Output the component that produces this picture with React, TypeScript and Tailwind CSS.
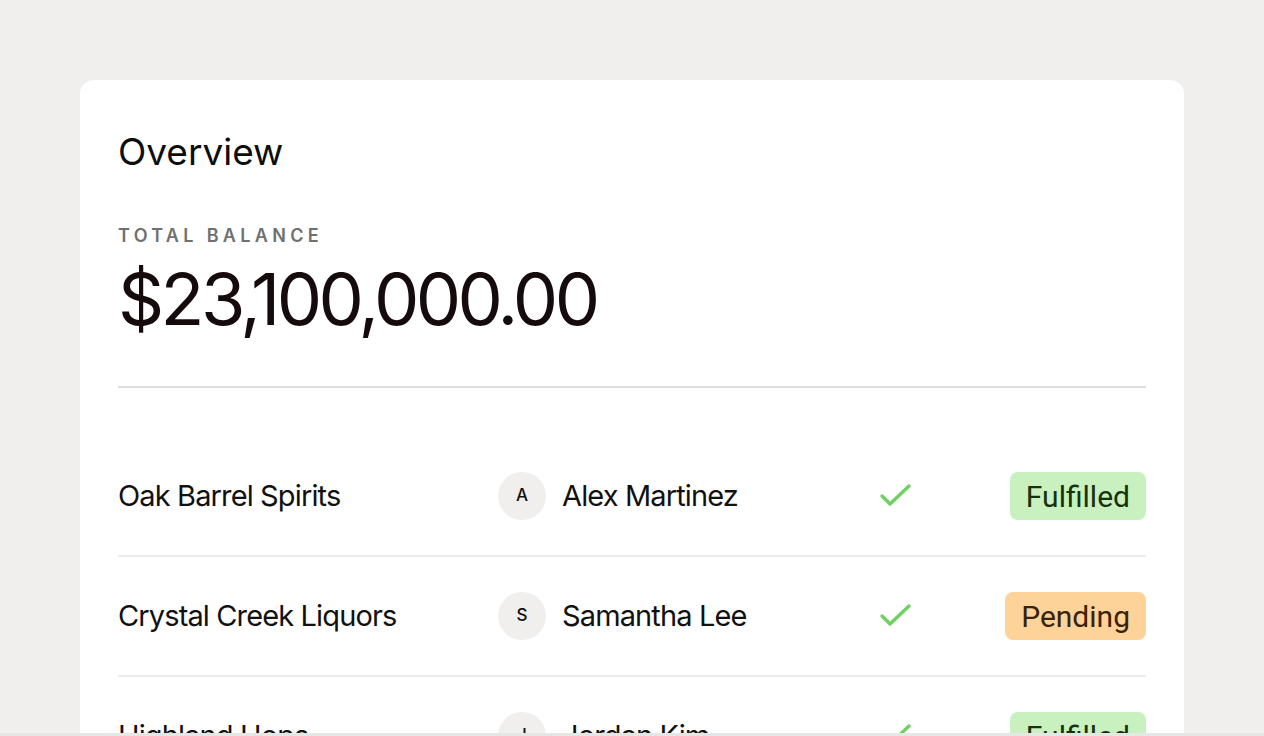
type Row = {
  company: string;
  person: string;
  status: "Fulfilled" | "Pending";
};

const rows: Row[] = [
  { company: "Oak Barrel Spirits", person: "Alex Martinez", status: "Fulfilled" },
  { company: "Crystal Creek Liquors", person: "Samantha Lee", status: "Pending" },
  { company: "Highland Hops", person: "Jordan Kim", status: "Fulfilled" },
];

const badgeClasses = {
  Fulfilled: "bg-[#c8f1bf] text-[#16320c]",
  Pending: "bg-[#fdd39a] text-[#3a2305]",
};

function CheckMark() {
  return (
    <svg width="34" height="28" viewBox="0 0 34 28" fill="none">
      <polyline
        points="3,14 11,22 30,4"
        stroke="#6fd260"
        strokeWidth="3.4"
        strokeLinecap="round"
        strokeLinejoin="round"
      />
    </svg>
  );
}

function OrderRow({ row }: { row: Row }) {
  return (
    <div className="flex items-center h-[120px] border-b-2 border-[#ececec]">
      <div className="w-[380px] text-[29px] tracking-[-0.03em] text-[#111]">
        {row.company}
      </div>
      <div className="flex items-center gap-[16px] w-[362px]">
        <div className="w-[48px] h-[48px] rounded-full bg-[#f0efee] flex items-center justify-center text-[17px] font-medium text-[#111]">
          {row.person[0]}
        </div>
        <span className="text-[29px] tracking-[-0.03em] text-[#111]">
          {row.person}
        </span>
      </div>
      <div className="w-[72px] flex justify-center">
        <CheckMark />
      </div>
      <div className="flex-1 flex justify-end">
        <span
          className={`h-[48px] px-[16px] flex items-center rounded-[8px] text-[30px] font-['Roboto',sans-serif] ${badgeClasses[row.status]}`}
        >
          {row.status}
        </span>
      </div>
    </div>
  );
}

export default function App() {
  return (
    <div className="h-screen flex flex-col bg-[#f0efed] font-['Inter',sans-serif] overflow-hidden">
      <div className="flex-1 overflow-hidden px-[80px] pt-[80px]">
        <div className="bg-white rounded-t-[14px] px-[38px] pt-[48px] pb-[40px]">
          <h1 className="text-[37px] leading-[48px] text-[#0d0d0d]">
            Overview
          </h1>
          <div className="mt-[48px] text-[18px] font-semibold tracking-[0.24em] text-[#707070] leading-[24px]">
            TOTAL BALANCE
          </div>
          <div className="mt-[11px] text-[72px] leading-[80px] tracking-[-0.05em] text-[#150a0c]">
            $23,100,000.00
          </div>
          <div className="mt-[47px] h-[2px] bg-[#dedede]" />
          <div className="pt-[49px]">
            {rows.map((r) => (
              <OrderRow key={r.company} row={r} />
            ))}
          </div>
        </div>
      </div>
      <div className="h-[3px] bg-[#e6e6e4]" />
    </div>
  );
}
